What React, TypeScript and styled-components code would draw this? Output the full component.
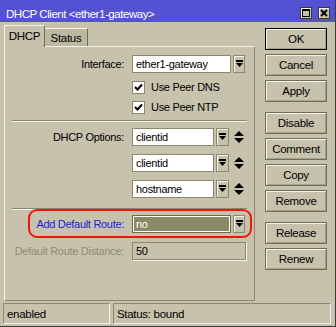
import React from 'react';
import styled, { createGlobalStyle, css } from 'styled-components';

const BG = '#c6c2ab';
const DARK = '#8b8870';
const LIGHT = '#f6f4ea';
const TITLE = '#5252d2';

const GlobalStyle = createGlobalStyle`
  html, body { margin: 0; padding: 0; background: ${BG}; }
  body {
    font-family: "Liberation Sans", Arial, sans-serif;
    font-size: 11px;
    letter-spacing: -0.3px;
    color: #000;
  }
  * { box-sizing: border-box; }
`;

const Window = styled.div`
  width: 336px;
  height: 327px;
  background: ${BG};
  border-right: 1px solid #3c3c3c;
  border-bottom: 1px solid #3c3c3c;
  display: flex;
  flex-direction: column;
`;

const TitleBar = styled.div`
  height: 22px;
  background: ${TITLE};
  display: flex;
  align-items: flex-start;
  padding: 0 5px 0 6px;
  color: #fff;
`;

const TitleText = styled.div`
  margin-top: 8px;
  font-size: 11.5px;
  letter-spacing: -0.45px;
  white-space: nowrap;
`;

const TitleButtons = styled.div`
  margin-left: auto;
  margin-top: 7px;
  display: flex;
  gap: 6px;
`;

const TitleButton = styled.div`
  width: 12px;
  height: 12px;
  background: ${BG};
  border: 1px solid #3c3c3c;
  box-shadow: inset 1px 1px ${LIGHT};
  display: flex;
  align-items: center;
  justify-content: center;
`;

const Body = styled.div`
  display: flex;
  height: 279px;
  padding: 3px 0 0 4px;
`;

const LeftCol = styled.div`
  width: 251px;
  display: flex;
  flex-direction: column;
`;

const TabBar = styled.div`
  height: 21px;
  display: flex;
  align-items: flex-end;
`;

const Tab = styled.div<{ $active?: boolean }>`
  display: flex;
  align-items: center;
  justify-content: center;
  font-size: 11.5px;
  ${(p) =>
    p.$active
      ? css`
          width: 41px;
          height: 22px;
          margin-bottom: -1px;
          background: ${BG};
          border-top: 1px solid ${LIGHT};
          border-left: 1px solid ${LIGHT};
          border-right: 1px solid #6f6c58;
          position: relative;
          z-index: 1;
          padding-bottom: 2px;
        `
      : css`
          width: 43px;
          height: 18px;
          background: #bdb9a1;
          border-top: 1px solid ${LIGHT};
          border-right: 1px solid #6f6c58;
        `}
`;

const Panel = styled.div`
  position: relative;
  height: 255px;
  border-top: 1px solid ${LIGHT};
  border-left: 1px solid ${LIGHT};
  border-right: 1px solid ${DARK};
  border-bottom: 1px solid ${DARK};
  padding-top: 8px;
  display: flex;
  flex-direction: column;
`;

const Row = styled.div<{ $mt?: number; $h?: number }>`
  display: flex;
  align-items: center;
  height: ${(p) => p.$h ?? 18}px;
  margin-top: ${(p) => p.$mt ?? 0}px;
`;

type Tone = 'normal' | 'blue' | 'disabled';

const Label = styled.div<{ $tone?: Tone }>`
  width: 119px;
  margin-right: 8px;
  text-align: right;
  white-space: nowrap;
  color: ${(p) =>
    p.$tone === 'blue' ? '#1c1cdc' : p.$tone === 'disabled' ? '#8f8c72' : '#000'};
`;

const Spacer = styled.div`
  width: 127px;
`;

type Variant = 'normal' | 'selected' | 'disabled';

const Field = styled.div<{ $w: number; $variant?: Variant }>`
  width: ${(p) => p.$w}px;
  height: 18px;
  padding-left: 3px;
  line-height: 16px;
  white-space: nowrap;
  overflow: hidden;
  border: 1px solid ${DARK};
  ${(p) =>
    p.$variant === 'selected'
      ? css`
          background: #8c8966;
          color: #fff;
          border-color: #6f6c55;
          box-shadow: inset 1px 1px #fff, inset -1px -1px #fff;
        `
      : p.$variant === 'disabled'
      ? css`
          background: ${BG};
          color: #000;
          box-shadow: 1px 1px ${LIGHT};
        `
      : css`
          background: #fff;
          color: #000;
        `}
`;

const DropButton = styled.div<{ $w?: number }>`
  width: ${(p) => p.$w ?? 12}px;
  height: 18px;
  margin-left: 2px;
  border: 1px solid ${DARK};
  background: ${BG};
  box-shadow: inset 1px 1px ${LIGHT};
  display: flex;
  align-items: center;
  justify-content: center;
`;

const UpDown = styled.div`
  margin-left: 5px;
  display: flex;
  align-items: center;
`;

const CheckBox = styled.div`
  width: 13px;
  height: 13px;
  margin-right: 6px;
  background: #fff;
  border: 1px solid ${DARK};
  display: flex;
  align-items: center;
  justify-content: center;
`;

const Separator = styled.div<{ $mt: number }>`
  margin: ${(p) => p.$mt}px 7px 0 7px;
  height: 2px;
  border-top: 1px solid ${DARK};
  border-bottom: 1px solid ${LIGHT};
`;

const Highlight = styled.div`
  position: absolute;
  top: 162px;
  left: 23px;
  width: 224px;
  height: 29px;
  border: 2px solid #ff0d0d;
  border-radius: 9px;
  pointer-events: none;
`;

const ButtonCol = styled.div`
  margin-left: 10px;
  margin-top: 3px;
  width: 62px;
  display: flex;
  flex-direction: column;
  gap: 10px;
`;

const ButtonGroup = styled.div`
  display: flex;
  flex-direction: column;
  gap: 4px;
`;

const Button = styled.div<{ $default?: boolean }>`
  height: 22px;
  display: flex;
  align-items: center;
  justify-content: center;
  font-size: 11.5px;
  background: ${BG};
  border: 1px solid ${(p) => (p.$default ? '#000' : '#6f6c58')};
  box-shadow: inset 1px 1px ${LIGHT}, inset -1px -1px #a4a18a;
`;

const StatusBar = styled.div`
  display: flex;
  gap: 3px;
  margin-top: 2px;
  padding: 0 3px;
  height: 21px;
`;

const StatusCell = styled.div<{ $w: number }>`
  width: ${(p) => p.$w}px;
  height: 21px;
  display: flex;
  align-items: center;
  padding-left: 3px;
  font-size: 11.5px;
  border-top: 1px solid ${DARK};
  border-left: 1px solid ${DARK};
  border-bottom: 1px solid ${LIGHT};
  border-right: 1px solid ${LIGHT};
`;

const DropIcon = () => (
  <svg width="7" height="8" viewBox="0 0 7 8">
    <rect x="0" y="0" width="7" height="2" fill="#000" />
    <polygon points="0,3 7,3 3.5,7" fill="#000" />
  </svg>
);

const UpDownIcon = () => (
  <svg width="10" height="12" viewBox="0 0 10 12">
    <polygon points="0,5 10,5 5,0" fill="#000" />
    <polygon points="0,7 10,7 5,12" fill="#000" />
  </svg>
);

const CheckIcon = () => (
  <svg width="9" height="9" viewBox="0 0 9 9">
    <path d="M1 4 L3.5 6.5 L8 1.5" stroke="#000" strokeWidth="2" fill="none" />
  </svg>
);

const MaxIcon = () => (
  <svg width="8" height="8" viewBox="0 0 8 8">
    <rect x="0.5" y="0.5" width="7" height="7" fill="none" stroke="#000" />
    <rect x="0" y="0" width="8" height="2" fill="#000" />
  </svg>
);

const CloseIcon = () => (
  <svg width="8" height="8" viewBox="0 0 8 8">
    <path d="M1 1 L7 7 M7 1 L1 7" stroke="#000" strokeWidth="2" />
  </svg>
);

const options = ['clientid', 'clientid', 'hostname'];

export default function App() {
  return (
    <>
      <GlobalStyle />
      <Window>
        <TitleBar>
          <TitleText>DHCP Client &lt;ether1-gateway&gt;</TitleText>
          <TitleButtons>
            <TitleButton>
              <MaxIcon />
            </TitleButton>
            <TitleButton>
              <CloseIcon />
            </TitleButton>
          </TitleButtons>
        </TitleBar>
        <Body>
          <LeftCol>
            <TabBar>
              <Tab $active>DHCP</Tab>
              <Tab>Status</Tab>
            </TabBar>
            <Panel>
              <Row>
                <Label>Interface:</Label>
                <Field $w={99}>ether1-gateway</Field>
                <DropButton>
                  <DropIcon />
                </DropButton>
              </Row>
              <Row $mt={4} $h={20}>
                <Spacer />
                <CheckBox>
                  <CheckIcon />
                </CheckBox>
                Use Peer DNS
              </Row>
              <Row $h={20}>
                <Spacer />
                <CheckBox>
                  <CheckIcon />
                </CheckBox>
                Use Peer NTP
              </Row>
              <Separator $mt={3} />
              {options.map((o, i) => (
                <Row key={i} $mt={i === 0 ? 6 : 8}>
                  {i === 0 ? <Label>DHCP Options:</Label> : <Spacer />}
                  <Field $w={82}>{o}</Field>
                  <DropButton $w={13}>
                    <DropIcon />
                  </DropButton>
                  <UpDown>
                    <UpDownIcon />
                  </UpDown>
                </Row>
              ))}
              <Separator $mt={10} />
              <Row $mt={5}>
                <Label $tone="blue">Add Default Route:</Label>
                <Field $w={99} $variant="selected">no</Field>
                <DropButton>
                  <DropIcon />
                </DropButton>
              </Row>
              <Row $mt={9}>
                <Label $tone="disabled">Default Route Distance:</Label>
                <Field $w={114} $variant="disabled">50</Field>
              </Row>
              <Highlight />
            </Panel>
          </LeftCol>
          <ButtonCol>
            <ButtonGroup>
              <Button $default>OK</Button>
              <Button>Cancel</Button>
              <Button>Apply</Button>
            </ButtonGroup>
            <ButtonGroup>
              <Button>Disable</Button>
              <Button>Comment</Button>
              <Button>Copy</Button>
              <Button>Remove</Button>
            </ButtonGroup>
            <ButtonGroup>
              <Button>Release</Button>
              <Button>Renew</Button>
            </ButtonGroup>
          </ButtonCol>
        </Body>
        <StatusBar>
          <StatusCell $w={107}>enabled</StatusCell>
          <StatusCell $w={218}>Status: bound</StatusCell>
        </StatusBar>
      </Window>
    </>
  );
}
